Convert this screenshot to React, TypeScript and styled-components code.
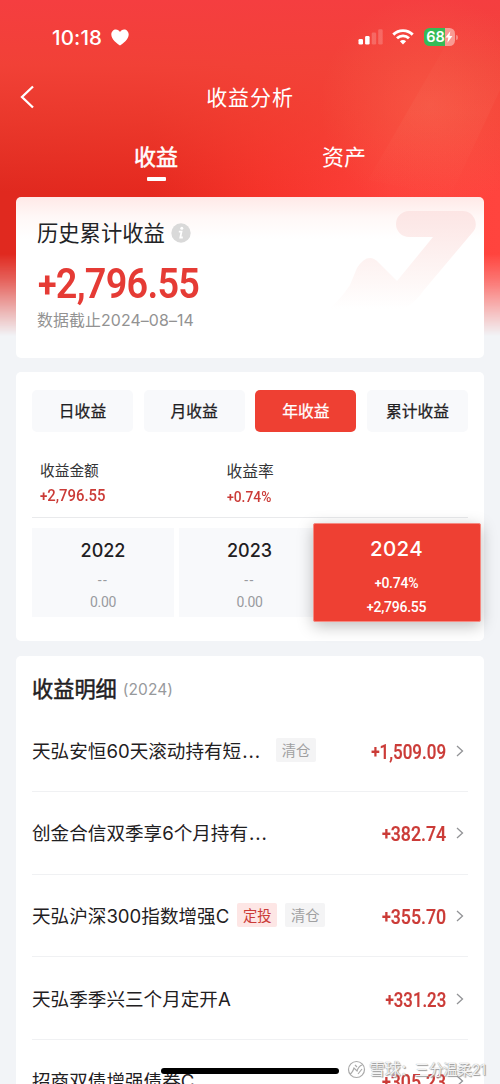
import React from "react";
import styled, { createGlobalStyle, css } from "styled-components";

const cjk = `"Noto Sans CJK SC", sans-serif`;
const latin = `Inter, "Noto Sans CJK SC", sans-serif`;
const din = `Roboto, "Noto Sans CJK SC", sans-serif`;

const Global = createGlobalStyle`
  * { box-sizing: border-box; }
  html, body { margin: 0; padding: 0; background: #f2f4f7; }
  body { font-family: ${cjk}; color: #1f2022; }
`;

const Screen = styled.main`
  position: relative;
  width: 500px;
  height: 1084px;
  overflow: hidden;
  background: #f2f4f7;
`;

const Backdrop = styled.div`
  position: absolute;
  inset: 0 0 auto 0;
  height: 338px;
  background:
    linear-gradient(to bottom, rgb(245, 62, 64) 0, rgba(242, 66, 56, 0.95) 65px, rgba(240, 66, 52, 0.6) 120px, rgba(240, 60, 46, 0) 192px),
    linear-gradient(to right, #e0291f 0, #e5291f 30%, #f5332a 52%, #fd403a 78%, #ff443e 100%);
  mask-image: linear-gradient(to bottom, #000 0, #000 254px, rgba(0, 0, 0, 0.72) 280px, rgba(0, 0, 0, 0.3) 312px, transparent 336px);
`;

const Rays = styled.svg`
  position: absolute;
  inset: 0 0 auto 0;
`;

const Content = styled.div`
  position: relative;
  display: flex;
  flex-direction: column;
`;

const StatusBar = styled.div`
  height: 74px;
  padding: 0 42px 0 52px;
  display: flex;
  align-items: center;
  justify-content: space-between;
  color: #fff;
`;

const Clock = styled.div`
  display: flex;
  align-items: center;
  gap: 6px;
  font: 500 20.5px/24px ${latin};
  padding-top: 1px;
  svg { margin: 0 0 0 3px; }
  letter-spacing: 0.15px;
`;

const ClockTime = styled.span`
  width: 50px;
  white-space: nowrap;
`;

const StatusIcons = styled.div`
  display: flex;
  align-items: center;
  svg { display: block; }
`;

const Battery = styled.div`
  display: flex;
  align-items: center;
  justify-content: center;
  width: 31px;
  height: 18px;
  margin-left: 10px;
  border-radius: 5.5px;
  background: linear-gradient(to right, #35bb57 0 68%, #f99a93 68%);
  font: 600 14.5px/18px ${latin};
  letter-spacing: 0;
`;

const BatteryTip = styled.i`
  width: 2px;
  height: 5px;
  margin-left: 1px;
  border-radius: 0 2px 2px 0;
  background: rgba(255, 255, 255, 0.35);
`;

const NavBar = styled.header`
  height: 46px;
  display: grid;
  grid-template-columns: 60px 1fr 60px;
  align-items: center;
  color: #fff;
  svg { display: block; margin-left: 20px; }
`;

const NavTitle = styled.h1`
  margin: -2px 0 0;
  text-align: center;
  font: 400 21px/30px ${cjk};
  letter-spacing: 0.9px;
`;

const TopTabs = styled.nav`
  height: 77px;
  padding: 20px 62px 0;
  display: grid;
  grid-template-columns: 1fr 1fr;
`;

const TopTab = styled.div<{ $active?: boolean }>`
  display: flex;
  flex-direction: column;
  align-items: center;
  gap: 7px;
  color: #fff;
  font: 400 22px/30px ${cjk};
  -webkit-text-stroke: ${(p) => (p.$active ? "0.5px #fff" : "0")};
  &::after {
    content: "";
    width: 19px;
    height: 4px;
    border-radius: 1px;
    background: ${(p) => (p.$active ? "#fff" : "transparent")};
  }
`;

const Card = styled.section`
  position: relative;
  margin: 0 16px;
  border-radius: 5px;
  background: #fff;
`;

const TotalCard = styled(Card)`
  height: 160.5px;
  padding: 19px 22px 0 21px;
  background: linear-gradient(to bottom, #ffe9e7 0, #fff8f7 20px, #fff 42px);
`;

const Watermark = styled.svg`
  position: absolute;
  top: 0;
  right: 0;
`;

const TotalLabel = styled.div`
  display: flex;
  align-items: center;
  gap: 6px;
  height: 32px;
  font: 400 21.3px/32px ${cjk};
  color: #222326;
  svg { margin-top: 1px; }
`;

const Figure = styled.span<{ $squeeze: number; $from?: string }>`
  display: inline-block;
  white-space: nowrap;
  transform: scaleX(${(p) => p.$squeeze});
  transform-origin: ${(p) => p.$from ?? "left"} center;
`;

const PlusSign = styled.span`
  font-size: 0.9em;
  font-weight: 700;
  line-height: 0;
  vertical-align: 0.03em;
`;

const TotalAmount = styled.div`
  height: 56px;
  margin: 8px 0 0 1px;
  font: 600 42px/56px ${din};
  letter-spacing: -0.8px;
  color: #e53b35;
`;

const TotalDate = styled.div`
  font: 400 15.9px/22px ${latin};
  margin-top: -2px;
  letter-spacing: 0.1px;
  color: #929292;
`;

const PeriodCard = styled(Card)`
  height: 269px;
  margin-top: 14.5px;
  padding: 18px 16px 0;
`;

const PeriodTabs = styled.div`
  display: grid;
  grid-template-columns: repeat(4, 1fr);
  gap: 10.7px;
`;

const PeriodTab = styled.button<{ $active?: boolean }>`
  height: 42px;
  padding: 0;
  border: 0;
  border-radius: 5px;
  background: ${(p) => (p.$active ? "#ee4033" : "#f8f9fb")};
  color: ${(p) => (p.$active ? "#fff" : "#1f2022")};
  font: 400 15.8px/42px ${cjk};
  -webkit-text-stroke: 0.25px currentColor;
`;

const Stats = styled.div`
  height: 85.5px;
  padding: 27px 8px 0;
  display: grid;
  grid-template-columns: 186.5px 1fr;
  border-bottom: 1px solid #e9eaec;
`;

const Stat = styled.div<{ $large?: boolean }>`
  display: flex;
  flex-direction: column;
  gap: ${(p) => (p.$large ? 4 : 4)}px;
  padding-top: ${(p) => (p.$large ? 1 : 0)}px;
  font: 400 ${(p) => (p.$large ? 15.8 : 14.7)}px/22px ${cjk};
  color: #333436;
`;

const StatValue = styled.span<{ $size: number }>`
  font: 500 ${(p) => p.$size}px/22px ${din};
  color: #cb3b37;
`;

const Years = styled.div`
  margin-top: 10.5px;
  display: grid;
  grid-template-columns: 142px 142px 168px;
  column-gap: 4.5px;
  margin-right: -30px;
`;

const gray = css`
  background: #f8f9fb;
  color: #999b9f;
`;

const YearCell = styled.div`
  height: 88.5px;
  padding-top: 10px;
  display: flex;
  flex-direction: column;
  align-items: center;
  ${gray}
`;

const SelectedYear = styled(YearCell)`
  height: 99px;
  width: 168px;
  margin: -5px 0 0 -12.5px;
  border: 1px solid #f58b83;
  border-radius: 2px;
  background: #ee4033;
  color: #fff;
  box-shadow: 0 4px 16px rgba(0, 0, 0, 0.26);
`;

const YearName = styled.div<{ $selected?: boolean }>`
  font: ${(p) => (p.$selected ? "500 20.5px/30px" : "500 18px/26px")} ${latin};
  letter-spacing: ${(p) => (p.$selected ? 0.3 : 0)}px;
  color: ${(p) => (p.$selected ? "#fff" : "#1f2022")};
`;

const YearFigure = styled.div<{ $gap: number; $tight?: boolean; $wide?: boolean }>`
  font: ${(p) => (p.$tight ? 500 : 400)} 14px/18px ${din};
  letter-spacing: ${(p) => (p.$tight ? -0.25 : p.$wide ? 1.5 : -0.3)}px;
  margin-top: ${(p) => p.$gap}px;
`;

const DetailCard = styled(Card)`
  height: 500px;
  margin-top: 14.5px;
  padding: 16px 16px 0;
`;

const DetailHeading = styled.h2`
  display: flex;
  align-items: center;
  gap: 6px;
  height: 32px;
  margin: 0 0 6px;
  font: 400 21.2px/32px ${cjk};
  -webkit-text-stroke: 0.5px #1f2022;
  small {
    font: 400 15.5px/22px ${latin};
    -webkit-text-stroke: 0;
    color: #97999c;
    padding-top: 4px;
    letter-spacing: 0.1px;
  }
`;

const FundRow = styled.div`
  height: 82.6px;
  padding-top: 1px;
  display: flex;
  align-items: center;
  border-bottom: 1px solid #f0f1f3;
`;

const FundName = styled.span`
  font: 400 18.6px/28px ${latin};
  color: #1f2022;
  white-space: nowrap;
  i { font-style: normal; letter-spacing: 0.9px; margin-left: 1px; }
`;

const Tag = styled.span<{ $red?: boolean; $gap: number }>`
  width: 40px;
  height: 24px;
  margin: -2px 0 0 ${(p) => p.$gap}px;
  border-radius: 2px;
  text-align: center;
  font: 400 14.3px/23px ${cjk};
  background: ${(p) => (p.$red ? "#fde6e5" : "#f4f4f5")};
  color: ${(p) => (p.$red ? "#cb3b37" : "#a0a0a1")};
`;

const FundAmount = styled.span`
  margin-left: auto;
  padding-top: 2px;
  font: 500 20px/28px ${din};
  color: #cb3b37;
  -webkit-text-stroke: 0.2px #cb3b37;
`;

const RowArrow = styled.svg`
  flex: none;
  margin: 0 4px 0 10px;
`;

const HomeIndicator = styled.div`
  position: absolute;
  left: 161px;
  bottom: 10.5px;
  width: 178px;
  height: 6px;
  border-radius: 3px;
  background: #000;
`;

const Credit = styled.div`
  position: absolute;
  left: 347px;
  bottom: 3px;
  display: flex;
  align-items: center;
  gap: 3px;
  height: 24px;
  white-space: nowrap;
  font: 400 14.6px/24px ${latin};
  letter-spacing: -0.35px;
  color: #f4f4f4;
  text-shadow: 0 0 1px #888, 1px 1px 1px #999;
  b { font-weight: 400; font-size: 16px; }
`;

const funds: { name: string; clipped?: boolean; amount: string; squeeze: number; tags: { text: string; red?: boolean; gap: number }[] }[] = [
  { name: "天弘安恒60天滚动持有短", clipped: true, amount: "1,509.09", squeeze: 0.85, tags: [{ text: "清仓", gap: 15 }] },
  { name: "创金合信双季享6个月持有", clipped: true, amount: "382.74", squeeze: 0.89, tags: [] },
  { name: "天弘沪深300指数增强C", amount: "355.70", squeeze: 0.89, tags: [{ text: "定投", red: true, gap: 8 }, { text: "清仓", gap: 8 }] },
  { name: "天弘季季兴三个月定开A", amount: "331.23", squeeze: 0.84, tags: [] },
  { name: "招商双债增强债券C", amount: "305.23", squeeze: 0.89, tags: [] },
];

export default function App() {
  return (
    <Screen>
      <Global />
      <Backdrop />
      <Rays width="500" height="197" viewBox="0 0 500 197">
        <defs>
          <linearGradient id="ray" x1="0" y1="0" x2="0" y2="1">
            <stop offset="0" stopColor="#ffb090" stopOpacity="0" />
            <stop offset="0.55" stopColor="#ffb090" stopOpacity="0.06" />
            <stop offset="1" stopColor="#ffb090" stopOpacity="0" />
          </linearGradient>
          <radialGradient id="glow" cx="430" cy="105" r="110" gradientUnits="userSpaceOnUse">
            <stop offset="0" stopColor="#ff8a64" stopOpacity="0.25" />
            <stop offset="1" stopColor="#ff8a64" stopOpacity="0" />
          </radialGradient>
        </defs>
        <rect x="300" width="200" height="197" fill="url(#glow)" />
        <path d="M466 10 L368 180 L450 197 L500 90 V10Z" fill="url(#ray)" />
      </Rays>
      <Content>
        <StatusBar>
          <Clock>
            <ClockTime>10:18</ClockTime>
            <svg width="18" height="17" viewBox="0 0 18 17" fill="#fff">
              <path d="M9 16.600C6.300 14.800.3 10.700.3 5.600.3 2.600 2.400.5 4.900.5 6.700.5 8.200 1.500 9 3 9.800 1.500 11.300.5 13.100.5c2.500 0 4.600 2.100 4.600 5.100 0 5.100-6 9.200-8.700 11Z" />
            </svg>
          </Clock>
          <StatusIcons>
            <svg width="26" height="16" viewBox="0 0 26 16" fill="#fff">
              <rect x="1.500" y="10" width="4.500" height="5.500" rx="1.300" />
              <rect x="8.100" y="7" width="4.500" height="8.500" rx="1.300" />
              <rect x="14.700" y="3.500" width="4.500" height="12" rx="1.300" opacity="0.2" />
              <rect x="21.200" y="0.300" width="4.500" height="15.200" rx="1.300" opacity="0.2" />
            </svg>
            <svg width="22" height="16" viewBox="0 0 22 16" fill="none" stroke="#fff" strokeWidth="2.900" style={{ marginLeft: 9 }}>
              <path d="M1.300 5.600C6.700.3 15.300.3 20.700 5.600" />
              <path d="M5 9.300c3.400-3.200 8.600-3.200 12 0" />
              <path d="M7.900 12.200c1.800-1.600 4.400-1.600 6.200 0L11 15.500Z" fill="#fff" stroke="none" />
            </svg>
            <Battery>
              68
              <svg width="8" height="12" viewBox="0 0 8 12" fill="#fff">
                <path d="M5.300.3.400 6.600h2.900l-.9 5.100 5-6.600H4.500Z" />
              </svg>
            </Battery>
            <BatteryTip />
          </StatusIcons>
        </StatusBar>
        <NavBar>
          <svg width="15" height="24" viewBox="0 0 15 24" fill="none" stroke="#fff" strokeWidth="2.300">
            <path d="M13 1.500 2 12l11 10.500" />
          </svg>
          <NavTitle>收益分析</NavTitle>
        </NavBar>
        <TopTabs>
          <TopTab $active>收益</TopTab>
          <TopTab>资产</TopTab>
        </TopTabs>

        <TotalCard>
          <Watermark width="170" height="120" viewBox="0 0 170 120">
            <defs>
              <linearGradient id="mark" x1="0" y1="14" x2="0" y2="112" gradientUnits="userSpaceOnUse">
                <stop offset="0" stopColor="#fce5e4" />
                <stop offset="0.350" stopColor="#fdeeed" />
                <stop offset="0.700" stopColor="#fef7f6" />
                <stop offset="1" stopColor="#fff" />
              </linearGradient>
            </defs>
            <path
              d="M95 14h53a13 13 0 0 1 10 22L110 93Q96 113 78 116H10Q24 106 36 88L43 71Q54 54 65 66L83 84 119 40H95a13 13 0 0 1 0-26Z"
              fill="url(#mark)"
            />
          </Watermark>
          <TotalLabel>
            历史累计收益
            <svg width="20" height="20" viewBox="0 0 20 20">
              <circle cx="10" cy="10" r="9.700" fill="#d9d9d9" />
              <circle cx="10.800" cy="5.300" r="1.500" fill="#fff" />
              <path d="M7.800 8.700h2.700L9.300 14.500h2.500" fill="none" stroke="#fff" strokeWidth="1.800" />
            </svg>
          </TotalLabel>
          <TotalAmount>
            <Figure $squeeze={0.9}><PlusSign>+</PlusSign>2,796.55</Figure>
          </TotalAmount>
          <TotalDate>数据截止2024–08–14</TotalDate>
        </TotalCard>

        <PeriodCard>
          <PeriodTabs>
            <PeriodTab>日收益</PeriodTab>
            <PeriodTab>月收益</PeriodTab>
            <PeriodTab $active>年收益</PeriodTab>
            <PeriodTab>累计收益</PeriodTab>
          </PeriodTabs>
          <Stats>
            <Stat>
              收益金额
              <StatValue $size={16}>
                <Figure $squeeze={0.93}><PlusSign>+</PlusSign>2,796.55</Figure>
              </StatValue>
            </Stat>
            <Stat $large>
              收益率
              <StatValue $size={15}>
                <Figure $squeeze={0.92}><PlusSign>+</PlusSign>0.74%</Figure>
              </StatValue>
            </Stat>
          </Stats>
          <Years>
            {["2022", "2023"].map((year) => (
              <YearCell key={year}>
                <YearName>{year}</YearName>
                <YearFigure $gap={7} $wide>--</YearFigure>
                <YearFigure $gap={4}>0.00</YearFigure>
              </YearCell>
            ))}
            <SelectedYear>
              <YearName $selected>2024</YearName>
              <YearFigure $gap={10} $tight><PlusSign>+</PlusSign>0.74%</YearFigure>
              <YearFigure $gap={6} $tight><PlusSign>+</PlusSign>2,796.55</YearFigure>
            </SelectedYear>
          </Years>
        </PeriodCard>

        <DetailCard>
          <DetailHeading>
            收益明细<small>(2024)</small>
          </DetailHeading>
          {funds.map((fund) => (
            <FundRow key={fund.name}>
              <FundName>{fund.name}{fund.clipped && <i>...</i>}</FundName>
              {fund.tags.map((tag) => (
                <Tag key={tag.text} $red={tag.red} $gap={tag.gap}>{tag.text}</Tag>
              ))}
              <FundAmount>
                <Figure $squeeze={fund.squeeze} $from="right"><PlusSign>+</PlusSign>{fund.amount}</Figure>
              </FundAmount>
              <RowArrow width="8" height="12" viewBox="0 0 8 12" fill="none" stroke="#929396" strokeWidth="1.300">
                <path d="M1 1l5.500 5L1 11" />
              </RowArrow>
            </FundRow>
          ))}
        </DetailCard>
      </Content>
      <HomeIndicator />
      <Credit>
        <svg width="19" height="19" viewBox="0 0 19 19" fill="none" stroke="#aaa" strokeWidth="1.200">
          <circle cx="9.500" cy="9.500" r="8" fill="#fff" fillOpacity="0.700" />
          <path d="M3 14c2-1 3-3 4-6l3 3c1-3 2-5 5-6M8 5l2 2M11 14l4-5" />
        </svg>
        <span><b>雪球</b>：三分温柔21</span>
      </Credit>
    </Screen>
  );
}
